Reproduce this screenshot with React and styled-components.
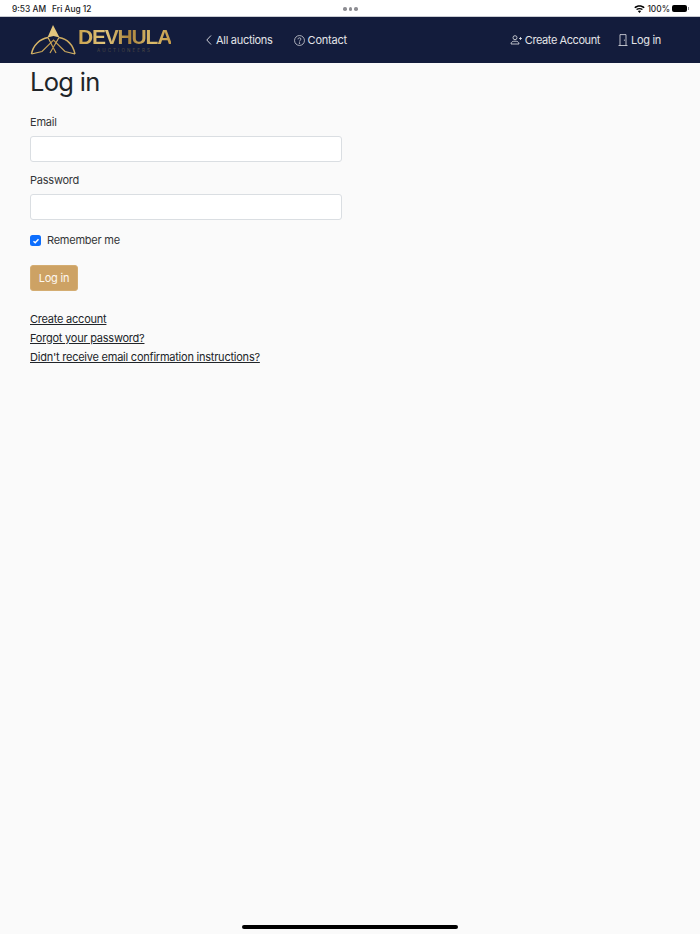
import React from 'react';
import styled, { createGlobalStyle } from 'styled-components';

const GlobalStyle = createGlobalStyle`
  html, body {
    margin: 0;
    padding: 0;
    background: #fafafa;
  }
  * {
    box-sizing: border-box;
  }
`;

const Page = styled.div`
  position: relative;
  display: flex;
  flex-direction: column;
  height: 934px;
  overflow: hidden;
  font-family: Inter, "Liberation Sans", sans-serif;
  color: #212529;
  background: #fafafa;
`;

const StatusBar = styled.div`
  position: relative;
  display: flex;
  align-items: center;
  justify-content: space-between;
  height: 17px;
  padding: 1px 10px 0 12px;
  background: #fff;
  border-bottom: 1px solid #c9ccd3;
  font-size: 8.4px;
  font-weight: 500;
  color: #1c1c1e;
`;

const StatusGroup = styled.div`
  display: flex;
  align-items: center;
  gap: ${(p) => p.$gap || 6}px;
`;

const Dots = styled.div`
  position: absolute;
  left: 343px;
  top: 7px;
  display: flex;
  gap: 2px;
`;

const Dot = styled.span`
  width: 3.5px;
  height: 3.5px;
  border-radius: 50%;
  background: #8e8e93;
`;

const Battery = styled.span`
  position: relative;
  width: 15px;
  height: 7px;
  border-radius: 2px;
  background: #000;
  margin-right: 3px;

  &::after {
    content: '';
    position: absolute;
    right: -2px;
    top: 2px;
    width: 1px;
    height: 3px;
    background: #8e8e93;
  }
`;

const Navbar = styled.nav`
  display: flex;
  align-items: center;
  height: 46px;
  padding: 0 39px 0 30px;
  background: #131c3c;
`;

const Brand = styled.a`
  display: flex;
  align-items: center;
  width: 175px;
  gap: 1px;
  text-decoration: none;
`;

const BrandText = styled.div`
  display: flex;
  flex-direction: column;
  align-items: center;
  margin-top: -1px;
`;

const BrandName = styled.span`
  font-family: "Liberation Sans", Arial, sans-serif;
  font-size: 21px;
  line-height: 20px;
  font-weight: 700;
  letter-spacing: -1.2px;
  background: linear-gradient(90deg, #c9a24e, #e3c67c 30%, #a8823c 55%, #dcbc6c 80%, #c39a4a);
  -webkit-background-clip: text;
  background-clip: text;
  color: transparent;
`;

const BrandSub = styled.span`
  margin-top: 1px;
  font-size: 4.5px;
  line-height: 5px;
  letter-spacing: 2.1px;
  color: #4d4a45;
`;

const NavLink = styled.a`
  display: flex;
  align-items: center;
  gap: ${(p) => p.$gap || 3}px;
  margin-right: ${(p) => p.$mr || 0}px;
  font-size: 11px;
  letter-spacing: ${(p) => p.$tight || -0.3}px;
  color: #e3e4e8;
  text-decoration: none;
  white-space: nowrap;
`;

const Spacer = styled.div`
  flex: 1;
`;

const Main = styled.main`
  width: 312px;
  margin-left: 30px;
`;

const Title = styled.h1`
  margin: 3px 0 17px;
  font-size: 25.5px;
  line-height: 32px;
  font-weight: 400;
  letter-spacing: -0.7px;
`;

const Field = styled.div`
  margin-bottom: 11px;
`;

const Label = styled.label`
  display: block;
  margin-bottom: 6px;
  font-size: 11px;
  letter-spacing: -0.23px;
  line-height: 15px;
  color: #333538;
`;

const Input = styled.input`
  display: block;
  width: 100%;
  height: 26px;
  padding: 0 9px;
  background: #fff;
  border: 1px solid #dadee2;
  border-radius: 3px;
  outline: none;
`;

const CheckRow = styled.label`
  display: flex;
  align-items: center;
  gap: 6px;
  margin-top: 13px;
  font-size: 11px;
  letter-spacing: -0.23px;
  line-height: 15px;
  color: #333538;
`;

const CheckBox = styled.span`
  display: flex;
  align-items: center;
  justify-content: center;
  width: 11px;
  height: 11px;
  border-radius: 2.5px;
  background: #0d6efd;
`;

const SubmitButton = styled.button`
  display: block;
  width: 48px;
  height: 26px;
  margin: 17px 0 21px;
  padding: 0;
  background: #cda264;
  border: 1px solid #d4ad72;
  border-radius: 3px;
  font-family: inherit;
  font-size: 11px;
  letter-spacing: -0.2px;
  color: #fdf8f0;
`;

const LinkList = styled.div`
  display: flex;
  flex-direction: column;
  align-items: flex-start;
  gap: 4px;
`;

const TextLink = styled.a`
  font-size: 11px;
  letter-spacing: -0.23px;
  line-height: 15px;
  color: #212529;
  text-decoration: underline;
`;

const HomeIndicator = styled.div`
  position: absolute;
  left: 242px;
  bottom: 5px;
  width: 216px;
  height: 4px;
  border-radius: 2px;
  background: #000;
`;

const LogoMark = () => (
  <svg width="47" height="32" viewBox="0 0 47 32" fill="none">
    <defs>
      <linearGradient id="gold" x1="0" y1="0" x2="1" y2="0">
        <stop offset="0" stopColor="#d9b766" />
        <stop offset="0.5" stopColor="#b8924a" />
        <stop offset="1" stopColor="#d8b86c" />
      </linearGradient>
    </defs>
    <path d="M23 1 L29.5 13.5 L23.5 12 L17.5 13.5 Z" fill="#e3c67e" />
    <path d="M1.5 30 C3 21 10 15 18 13.5" stroke="#d8b668" strokeWidth="1.5" />
    <path d="M29 13.5 C37 15 43 21 45 30" stroke="#cfac60" strokeWidth="1.5" />
    <path d="M1.5 30 L12 27.5 L23.5 16 L35 27.5 L45 30" stroke="url(#gold)" strokeWidth="1.2" />
    <path d="M18 13.5 L26 29 M29 13.5 L20 29" stroke="url(#gold)" strokeWidth="1.2" />
  </svg>
);

const ChevronIcon = () => (
  <svg width="8" height="12" viewBox="0 0 8 12" fill="none" stroke="#e3e4e8" strokeWidth="0.9">
    <path d="M6 1.5 L1.8 6 L6 10.5" />
  </svg>
);

const QuestionIcon = () => (
  <svg width="11" height="11" viewBox="0 0 12 12" fill="none" stroke="#e3e4e8" strokeWidth="0.8">
    <circle cx="6" cy="6" r="5.4" />
    <path d="M4.4 4.7 C4.4 3.6 5.1 3.1 6 3.1 C7 3.1 7.6 3.7 7.6 4.5 C7.6 5.6 6 5.7 6 7.1" />
    <circle cx="6" cy="8.8" r="0.4" fill="#e3e4e8" />
  </svg>
);

const PersonPlusIcon = () => (
  <svg width="12" height="10" viewBox="0 0 12 10" fill="none" stroke="#e3e4e8" strokeWidth="0.8">
    <circle cx="5" cy="2.7" r="2" />
    <path d="M1 9 C1 6.8 2.8 6.2 5 6.2 C7.2 6.2 9 6.8 9 9 Z" />
    <path d="M9 3.5 H12 M10.5 2 V5" />
  </svg>
);

const DoorIcon = () => (
  <svg width="10" height="12" viewBox="0 0 10 12" fill="none" stroke="#e3e4e8" strokeWidth="0.8">
    <path d="M0.5 11.5 H9.5 M2 11.5 V0.6 H8 V11.5" />
    <path d="M6.4 5.6 V6.8" />
  </svg>
);

const WifiIcon = () => (
  <svg width="11" height="8" viewBox="0 0 11 8" fill="#000">
    <path d="M5.5 8 L3.8 6 C4.8 5.2 6.2 5.2 7.2 6 Z" />
    <path d="M3 5.1 L2.1 4.1 C4.1 2.5 6.9 2.5 8.9 4.1 L8 5.1 C6.5 3.9 4.5 3.9 3 5.1 Z" />
    <path d="M1.3 3.2 L0.3 2.2 C3.3 -0.4 7.7 -0.4 10.7 2.2 L9.7 3.2 C7.3 1.1 3.7 1.1 1.3 3.2 Z" />
  </svg>
);

const CheckIcon = () => (
  <svg width="8" height="8" viewBox="0 0 8 8" fill="none" stroke="#fff" strokeWidth="1.4">
    <path d="M1.5 4.2 L3.2 5.8 L6.5 2.2" />
  </svg>
);

const App = () => {
  return (
    <>
      <GlobalStyle />
      <Page>
        <StatusBar>
          <StatusGroup>
            <span>9:53 AM</span>
            <span>Fri Aug 12</span>
          </StatusGroup>
          <Dots>
            <Dot />
            <Dot />
            <Dot />
          </Dots>
          <StatusGroup $gap={2}>
            <WifiIcon />
            <span>100%</span>
            <Battery />
          </StatusGroup>
        </StatusBar>
        <Navbar>
          <Brand href="#">
            <LogoMark />
            <BrandText>
              <BrandName>DEVHULA</BrandName>
              <BrandSub>AUCTIONEERS</BrandSub>
            </BrandText>
          </Brand>
          <NavLink href="#" $mr={21}>
            <ChevronIcon />
            All auctions
          </NavLink>
          <NavLink href="#" $gap={3} $tight={-0.2}>
            <QuestionIcon />
            Contact
          </NavLink>
          <Spacer />
          <NavLink href="#" $mr={18} $gap={3} $tight={-0.42}>
            <PersonPlusIcon />
            Create Account
          </NavLink>
          <NavLink href="#" $gap={3}>
            <DoorIcon />
            Log in
          </NavLink>
        </Navbar>
        <Main>
          <Title>Log in</Title>
          <Field>
            <Label>Email</Label>
            <Input type="email" />
          </Field>
          <Field>
            <Label>Password</Label>
            <Input type="password" />
          </Field>
          <CheckRow>
            <CheckBox>
              <CheckIcon />
            </CheckBox>
            Remember me
          </CheckRow>
          <SubmitButton>Log in</SubmitButton>
          <LinkList>
            <TextLink href="#">Create account</TextLink>
            <TextLink href="#">Forgot your password?</TextLink>
            <TextLink href="#">Didn't receive email confirmation instructions?</TextLink>
          </LinkList>
        </Main>
        <HomeIndicator />
      </Page>
    </>
  );
};

export default App;
